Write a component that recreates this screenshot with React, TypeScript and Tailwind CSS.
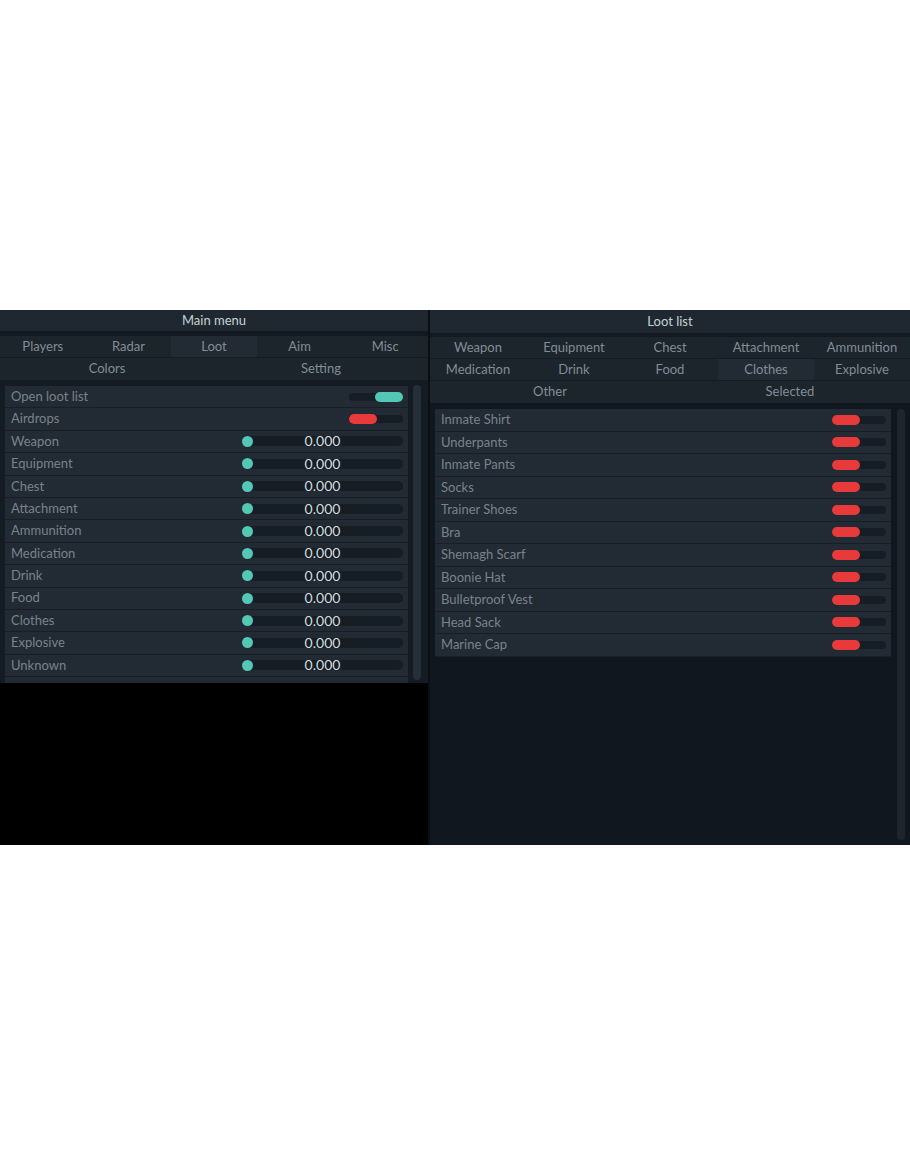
import React from "react";

const font = { fontFamily: "Lato, 'Open Sans', 'DejaVu Sans', sans-serif" };

const mainTabs = ["Players", "Radar", "Loot", "Aim", "Misc"];
const lootTabs1 = ["Weapon", "Equipment", "Chest", "Attachment", "Ammunition"];
const lootTabs2 = ["Medication", "Drink", "Food", "Clothes", "Explosive"];

const sliderRows = [
  "Weapon",
  "Equipment",
  "Chest",
  "Attachment",
  "Ammunition",
  "Medication",
  "Drink",
  "Food",
  "Clothes",
  "Explosive",
  "Unknown",
];

const lootItems = [
  "Inmate Shirt",
  "Underpants",
  "Inmate Pants",
  "Socks",
  "Trainer Shoes",
  "Bra",
  "Shemagh Scarf",
  "Boonie Hat",
  "Bulletproof Vest",
  "Head Sack",
  "Marine Cap",
];

function Toggle({ on }: { on: boolean }) {
  return (
    <div className="relative h-[8px] w-[54px] rounded-full bg-[#161d25]">
      <div
        className={
          on
            ? "absolute right-0 top-[-1px] h-[10px] w-[28px] rounded-full bg-[#52c8b5]"
            : "absolute left-0 top-[-1px] h-[10px] w-[28px] rounded-full bg-[#e8393b]"
        }
      />
    </div>
  );
}

function Slider() {
  return (
    <div className="relative flex h-[10px] w-[161px] items-center rounded-full bg-[#161d25]">
      <div className="absolute left-0 top-[-0.5px] h-[11px] w-[11px] rounded-full bg-[#52c8b5]" />
      <span className="relative w-full text-center text-[14px] leading-none text-[#d3dbde]">0.000</span>
    </div>
  );
}

function Row({ label, h, children }: { label: string; h: string; children?: React.ReactNode }) {
  return (
    <div
      className={
        h === "loot"
          ? "flex h-[22.5px] shrink-0 items-center justify-between border-b border-[#171e26] bg-[#222a33] pl-[6px] pr-[5px]"
          : "flex h-[22.4px] shrink-0 items-center justify-between border-b border-[#171e26] bg-[#222a33] pl-[6px] pr-[5px]"
      }
    >
      <span className="text-[13px] text-[#78838b]">{label}</span>
      {children}
    </div>
  );
}

export default function App() {
  return (
    <div className="h-[1155px] w-[910px] bg-white" style={font}>
      <div className="h-[310px]" />
      <div className="flex h-[535px] w-[910px] bg-black">
        {/* Main menu window */}
        <div className="flex h-[373px] w-[428px] flex-col bg-[#141b22]">
          <div className="flex h-[21px] shrink-0 items-center justify-center bg-[#1f2831] text-[13px] text-[#c5d2d4]">
            Main menu
          </div>
          <div className="h-[5px] shrink-0 bg-[#131920]" />
          <div className="grid h-[22px] shrink-0 grid-cols-5 border-b border-[#161c23] bg-[#1c242c]">
            {mainTabs.map((t) => (
              <div
                key={t}
                className={
                  t === "Loot"
                    ? "flex items-center justify-center bg-[#222b34] text-[13px] text-[#828d95]"
                    : "flex items-center justify-center text-[13px] text-[#828d95]"
                }
              >
                {t}
              </div>
            ))}
          </div>
          <div className="grid h-[22px] shrink-0 grid-cols-2 bg-[#1c242c]">
            {["Colors", "Setting"].map((t) => (
              <div key={t} className="flex items-center justify-center text-[13px] text-[#828d95]">
                {t}
              </div>
            ))}
          </div>
          <div className="flex min-h-0 flex-1 gap-[5px] overflow-hidden pl-[5px] pt-[6px]">
            <div className="flex w-[403px] flex-col">
              <Row label="Open loot list" h="main">
                <Toggle on />
              </Row>
              <Row label="Airdrops" h="main">
                <Toggle on={false} />
              </Row>
              {sliderRows.map((r) => (
                <Row key={r} label={r} h="main">
                  <Slider />
                </Row>
              ))}
              <div className="h-[12px] shrink-0 bg-[#222a33]" />
            </div>
            <div className="mt-[-1px] h-[295px] w-[8px] shrink-0 rounded-full bg-[#262e37]" />
          </div>
        </div>

        <div className="w-[2px] bg-[#0b0f13]" />

        {/* Loot list window */}
        <div className="flex h-full w-[480px] flex-col bg-[#10171e]">
          <div className="flex h-[23px] shrink-0 items-center justify-center bg-[#1f2831] text-[13px] text-[#c5d2d4]">
            Loot list
          </div>
          <div className="h-[4px] shrink-0 bg-[#131920]" />
          <div className="grid h-[22px] shrink-0 grid-cols-5 border-b border-[#161c23] bg-[#1c242c]">
            {lootTabs1.map((t) => (
              <div key={t} className="flex items-center justify-center text-[13px] text-[#828d95]">
                {t}
              </div>
            ))}
          </div>
          <div className="grid h-[22px] shrink-0 grid-cols-5 border-b border-[#161c23] bg-[#1c242c]">
            {lootTabs2.map((t) => (
              <div
                key={t}
                className={
                  t === "Clothes"
                    ? "flex items-center justify-center bg-[#222b34] text-[13px] text-[#828d95]"
                    : "flex items-center justify-center text-[13px] text-[#828d95]"
                }
              >
                {t}
              </div>
            ))}
          </div>
          <div className="grid h-[22px] shrink-0 grid-cols-2 bg-[#1c242c]">
            {["Other", "Selected"].map((t) => (
              <div key={t} className="flex items-center justify-center text-[13px] text-[#828d95]">
                {t}
              </div>
            ))}
          </div>
          <div className="flex min-h-0 flex-1 gap-[6px] pl-[5px] pt-[6px]">
            <div className="flex w-[456px] flex-col">
              {lootItems.map((i) => (
                <Row key={i} label={i} h="loot">
                  <Toggle on={false} />
                </Row>
              ))}
            </div>
            <div className="mb-[5px] w-[8px] shrink-0 rounded-full bg-[#1d252e]" />
          </div>
        </div>
      </div>
    </div>
  );
}
